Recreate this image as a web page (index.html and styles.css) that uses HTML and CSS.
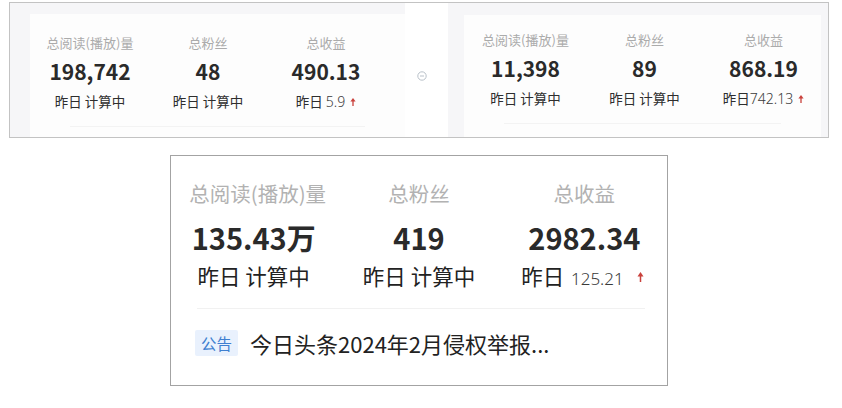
FILE: index.html
```html
<!DOCTYPE html>
<html lang="zh-CN">
<head>
    <meta charset="UTF-8">
    <title>数据概览</title>
    <link rel="stylesheet" href="styles.css">
</head>
<body>
    <div class="shot-top">
        <div class="panel panel-left">
            <div class="card card-left">
                <div class="stats">
                    <div class="stat">
                        <div class="label">总阅读(播放)量</div>
                        <div class="value">198,742</div>
                        <div class="sub">昨日 计算中</div>
                    </div>
                    <div class="stat">
                        <div class="label">总粉丝</div>
                        <div class="value">48</div>
                        <div class="sub">昨日 计算中</div>
                    </div>
                    <div class="stat">
                        <div class="label">总收益</div>
                        <div class="value">490.13</div>
                        <div class="sub">昨日 <span class="num">5.9</span>
                            <svg class="up" width="6" height="8" viewBox="0 0 6 8"><path d="M3 8V3" stroke="#c9413c" stroke-width="1.3"/><path d="M0.4 3.6L3 0 5.6 3.6Z" fill="#c9413c"/></svg>
                        </div>
                    </div>
                </div>
                <div class="faint-line"></div>
            </div>
        </div>
        <div class="gap">
            <svg width="10" height="10" viewBox="0 0 10 10"><circle cx="5" cy="5" r="4.2" fill="none" stroke="#b9c1c9" stroke-width="1"/><path d="M3 5H7" stroke="#b9c1c9" stroke-width="1"/></svg>
        </div>
        <div class="panel panel-right">
            <div class="card card-right">
                <div class="stats">
                    <div class="stat">
                        <div class="label">总阅读(播放)量</div>
                        <div class="value">11,398</div>
                        <div class="sub">昨日 计算中</div>
                    </div>
                    <div class="stat">
                        <div class="label">总粉丝</div>
                        <div class="value">89</div>
                        <div class="sub">昨日 计算中</div>
                    </div>
                    <div class="stat">
                        <div class="label">总收益</div>
                        <div class="value">868.19</div>
                        <div class="sub">昨日<span class="num">742.13</span>
                            <svg class="up" width="6" height="8" viewBox="0 0 6 8"><path d="M3 8V3" stroke="#c9413c" stroke-width="1.3"/><path d="M0.4 3.6L3 0 5.6 3.6Z" fill="#c9413c"/></svg>
                        </div>
                    </div>
                </div>
                <div class="faint-line"></div>
            </div>
        </div>
    </div>

    <div class="shot-bottom">
        <div class="big-stats">
            <div class="stat">
                <div class="label">总阅读(播放)量</div>
                <div class="value">135.43万</div>
                <div class="sub">昨日 计算中</div>
            </div>
            <div class="stat">
                <div class="label">总粉丝</div>
                <div class="value">419</div>
                <div class="sub">昨日 计算中</div>
            </div>
            <div class="stat">
                <div class="label">总收益</div>
                <div class="value">2982.34</div>
                <div class="sub">昨日 <span class="num">125.21</span>
                    <svg class="up" width="7" height="10" viewBox="0 0 7 10"><path d="M3.5 10V4" stroke="#c9413c" stroke-width="1.5"/><path d="M0.5 4.5L3.5 0 6.5 4.5Z" fill="#c9413c"/></svg>
                </div>
            </div>
        </div>
        <div class="divider"></div>
        <div class="notice">
            <span class="tag">公告</span>
            <span class="notice-text">今日头条2024年2月侵权举报...</span>
        </div>
    </div>
</body>
</html>
```

FILE: styles.css
```css
body {
    margin: 0;
    background: #ffffff;
    font-family: "Noto Sans CJK SC", "Noto Sans", sans-serif;
    color: #2b2b2b;
}

/* top screenshot */
.shot-top {
    display: flex;
    box-sizing: border-box;
    width: 820px;
    height: 136px;
    margin: 2px 0 0 9px;
    border: 1px solid #c3c3c3;
    overflow: hidden;
}
.panel {
    background: #f6f6f8;
    height: 100%;
}
.panel-left {
    width: 395px;
    padding: 11px 0 0 20px;
    box-sizing: border-box;
}
.panel-right {
    width: 380px;
    padding: 12px 7px 0 16px;
    box-sizing: border-box;
}
.card {
    background: #fdfdfd;
    height: 100%;
}
.card-left {
    padding-top: 20px;
    box-sizing: border-box;
}
.card-right {
    padding-top: 16px;
    box-sizing: border-box;
}
.gap {
    width: 43px;
    display: flex;
    align-items: center;
    justify-content: center;
    padding-top: 12px;
    padding-right: 9px;
    box-sizing: border-box;
}
.gap svg {
    display: block;
}
.stats {
    display: grid;
    grid-template-columns: repeat(3, 118px);
    padding-left: 1px;
}
.card-right .stats {
    grid-template-columns: repeat(3, 119px);
    padding-left: 2px;
}
.stat {
    text-align: center;
}
.stats .label {
    font-size: 13px;
    line-height: 18px;
    color: #ababab;
}
.stats .value {
    margin-top: 5px;
    font-size: 21px;
    line-height: 28px;
    font-weight: bold;
    color: #2a2a2a;
}
.stats .sub {
    margin-top: 6px;
    font-size: 13.5px;
    line-height: 20px;
    color: #2e2e2e;
}
.num {
    font-family: "Noto Sans", sans-serif;
    font-weight: 300;
    color: #3a3a3a;
}
.stats .num {
    font-size: 14px;
}
.up {
    vertical-align: 1px;
    margin-left: 2px;
}
.faint-line {
    margin: 14px 40px 0 40px;
    height: 1px;
    background: #f3f3f3;
}

/* bottom screenshot */
.shot-bottom {
    box-sizing: border-box;
    width: 498px;
    height: 231px;
    margin: 17px 0 0 170px;
    border: 1px solid #a3a3a3;
    padding-top: 23px;
    background: #fff;
}
.big-stats {
    display: grid;
    grid-template-columns: repeat(3, 1fr);
}
.big-stats .label {
    font-size: 20.5px;
    line-height: 28px;
    color: #b2b2b2;
}
.big-stats .stat:first-child .label {
    padding-left: 8px;
}
.big-stats .value {
    margin-top: 10px;
    font-size: 29px;
    line-height: 40px;
    font-weight: bold;
    color: #2a2a2a;
}
.big-stats .sub {
    margin-top: 4px;
    font-size: 21.5px;
    line-height: 30px;
    color: #222;
}
.big-stats .stat:last-child .sub {
    padding-right: 3px;
}
.big-stats .num {
    font-size: 17px;
    margin-left: 2px;
}
.big-stats .up {
    margin-left: 9px;
    vertical-align: 3px;
}
.divider {
    margin: 14px 22px 0 26px;
    height: 1px;
    background: #f1f1f1;
}
.notice {
    display: flex;
    align-items: center;
    margin: 20px 0 0 24px;
}
.tag {
    background: #e9f1fd;
    color: #3f7fd0;
    font-size: 15.5px;
    line-height: 26px;
    padding: 0 6px;
    border-radius: 2px;
}
.notice-text {
    margin-left: 12px;
    font-size: 22px;
    line-height: 28px;
    color: #222;
}
```
